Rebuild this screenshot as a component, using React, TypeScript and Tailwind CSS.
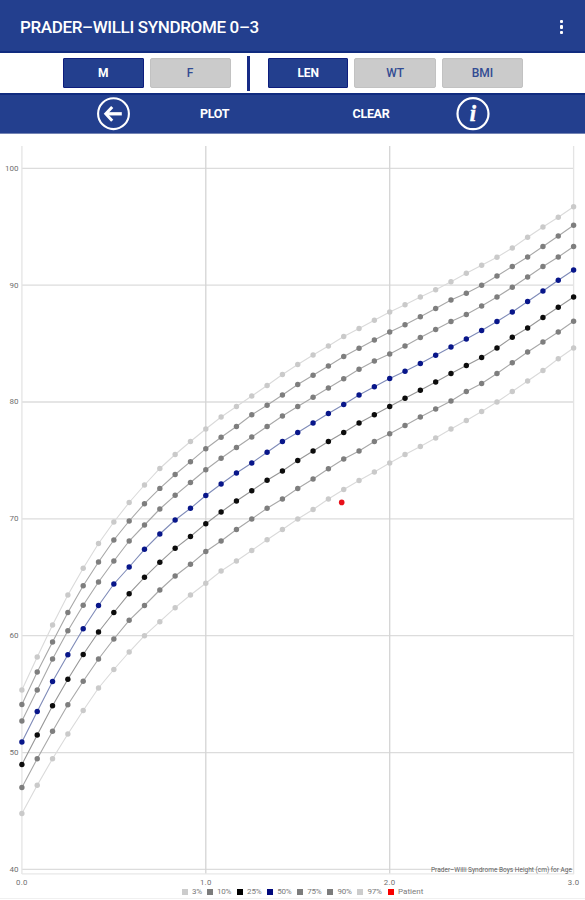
const X0 = 21.9
const STEP = 15.325
const CHART_TOP = 134

interface Series {
  label: string
  color: string
  line: string
  swatch: string
  points: number[]
}

// one point per month, 0 - 36
const series: Series[] = [
  {
    label: '3%',
    color: '#cacaca',
    line: '#dadada',
    swatch: 'bg-[#cccccc]',
    points: [
      813.5, 785.3, 758.7, 734, 710.5, 688, 669.5, 652, 635.7, 621.7, 607.7, 595, 583.3, 571, 561, 550.5, 539.7, 529.5, 519,
      509.5, 499, 489.5, 480.5, 472, 463, 454.5, 446.5, 438, 429, 420.5, 411.5, 402, 391.5, 381, 370.5, 358.7, 348,
    ],
  },
  {
    label: '10%',
    color: '#7e7e7e',
    line: '#a8a8a8',
    swatch: 'bg-[#7c7c7c]',
    points: [
      787.5, 758.7, 731.3, 704.7, 681.3, 659, 639, 620.3, 605.5, 590, 576, 564.3, 551.5, 541, 529.5, 519, 508.3, 499, 488.5,
      479, 468.7, 459, 451, 441.5, 433.7, 425.5, 417, 409, 401, 391.5, 383.5, 373.5, 362.7, 352, 342, 332, 321.3,
    ],
  },
  {
    label: '25%',
    color: '#0c0c0c',
    line: '#969696',
    swatch: 'bg-black',
    points: [
      764.5, 735, 705.7, 679.3, 654.5, 632, 612.5, 593.7, 577.3, 562.3, 548.3, 536.5, 523.7, 512, 501, 490.7, 480.3, 471, 460.5,
      451, 441.5, 432.5, 423, 414.7, 406.5, 398.3, 390.3, 382, 373.5, 365.5, 357.5, 348, 337.3, 328, 317.5, 307.3, 297,
    ],
  },
  {
    label: '50%',
    color: '#08168a',
    line: '#7f8bb8',
    swatch: 'bg-[#00087c]',
    points: [
      742, 711.5, 681.5, 654.7, 628.7, 605.5, 584, 567, 549.3, 534, 520, 508.3, 495.5, 484, 473, 463, 452.3, 441.5, 432.5,
      423, 413.5, 404.5, 395, 386.7, 378.5, 371.3, 363.5, 355.3, 347, 339, 330.5, 321.5, 312, 301.5, 291, 280.3, 270,
    ],
  },
  {
    label: '75%',
    color: '#7e7e7e',
    line: '#a8a8a8',
    swatch: 'bg-[#7c7c7c]',
    points: [
      721, 690, 659, 630.7, 605.3, 582, 561, 541, 525, 509, 495.3, 482.5, 469.8, 458.3, 447.5, 437, 426.5, 416, 406.5,
      397.3, 388, 378.7, 369.3, 361, 354, 346, 337.5, 329.5, 321.5, 314.5, 306, 297, 287.3, 277, 266.5, 257, 246.5,
    ],
  },
  {
    label: '90%',
    color: '#7e7e7e',
    line: '#a8a8a8',
    swatch: 'bg-[#7c7c7c]',
    points: [
      704.5, 672, 642, 612.5, 585.7, 562, 540, 521, 503.7, 488.4, 474.5, 461.7, 448.7, 437.3, 426.5, 414.7, 405.3, 395, 384.5,
      375.3, 366, 356.5, 348.3, 340, 332, 324.7, 316.7, 308.5, 300, 293.3, 285.3, 276, 266.5, 257, 246.5, 236, 225.3,
    ],
  },
  {
    label: '97%',
    color: '#cacaca',
    line: '#dadada',
    swatch: 'bg-[#cccccc]',
    points: [
      690, 657, 625, 595, 568.3, 543.5, 522, 502.5, 485, 468.5, 454.5, 441.5, 429, 417, 406.5, 396, 385.5, 374.5, 364.5,
      355, 346, 336.5, 328.5, 320.3, 312, 304.7, 297, 289.8, 281.7, 273.3, 265.3, 257.3, 248, 237.3, 227, 217.3, 206.7,
    ],
  },
]

const yTicks = [100, 90, 80, 70, 60, 50, 40]
const xTicks = ['0.0', '1.0', '2.0', '3.0']

const yFor = (value: number) => 168.3 + (100 - value) * 11.685 - CHART_TOP
const xFor = (month: number) => X0 + month * STEP

interface ToggleProps {
  label: string
  active?: boolean
}

function Toggle({ label, active }: ToggleProps) {
  return (
    <button
      className={
        active
          ? 'h-[30px] w-[80.5px] rounded-[1px] border border-[#0d1d7d] bg-[#233f8e] text-[12px] font-bold text-white'
          : 'h-[30px] w-[81.3px] rounded-[2px] border border-[#c2c2c2] bg-[#cbcbcb] text-[12px] font-medium text-[#324b93]'
      }
    >
      {label}
    </button>
  )
}

function Chart() {
  return (
    <svg width="585" height="752" viewBox="0 0 585 752" className="block shrink-0" fontFamily="Roboto, sans-serif">
      {/* grid */}
      {yTicks.map((tick) => (
        <g key={tick}>
          <line x1={X0} x2="574" y1={yFor(tick)} y2={yFor(tick)} stroke="#dcdcdc" strokeWidth="1.3" />
          <text x="18.6" y={yFor(tick) + 2.4} fontSize="8" textAnchor="end" fill="#6f6f6f">
            {tick}
          </text>
        </g>
      ))}
      {xTicks.map((tick, i) => (
        <g key={tick}>
          <line
            x1={xFor(i * 12)}
            x2={xFor(i * 12)}
            y1="12"
            y2="740"
            stroke={i === 1 || i === 2 ? '#d4d4d4' : '#e4e4e4'}
            strokeWidth="1.3"
          />
          <text x={xFor(i * 12)} y="751" fontSize="7.8" letterSpacing="0.3" textAnchor="middle" fill="#6f6f6f">
            {tick}
          </text>
        </g>
      ))}
      <line x1={X0} x2="574" y1="739.8" y2="739.8" stroke="#e8e8e8" strokeWidth="1.3" />

      {/* percentile curves */}
      {series.map((s) => (
        <g key={s.label}>
          <polyline
            points={s.points.map((y, i) => `${xFor(i)},${y - CHART_TOP}`).join(' ')}
            fill="none"
            stroke={s.line}
            strokeWidth="1.1"
          />
          {s.points.map((y, i) => (
            <circle key={i} cx={xFor(i)} cy={y - CHART_TOP} r="2.7" fill={s.color} />
          ))}
        </g>
      ))}

      {/* patient */}
      <circle cx="341.7" cy="368.4" r="2.8" fill="#e8101a" />

      <text x="572" y="738.4" fontSize="6.6" textAnchor="end" fill="#5c5c5c" textLength="141" lengthAdjust="spacingAndGlyphs">
        Prader–Willi Syndrome Boys Height (cm) for Age
      </text>
    </svg>
  )
}

export default function App() {
  return (
    <div className="flex h-[900px] w-[585px] flex-col overflow-hidden bg-white font-['Roboto',sans-serif]">
      <header className="flex h-[53px] shrink-0 items-center justify-between border-b-2 border-[#102b7f] bg-[#233f8e] pr-[22px] pl-[20px]">
        <h1 className="pt-[4px] text-[17px] font-medium tracking-[-0.35px] whitespace-nowrap text-white">
          PRADER–WILLI SYNDROME 0–3
        </h1>
        <button className="flex flex-col gap-[2px] pt-[3px]">
          <span className="size-[3.5px] rounded-[1px] bg-white" />
          <span className="size-[3.5px] rounded-[1px] bg-white" />
          <span className="size-[3.5px] rounded-[1px] bg-white" />
        </button>
      </header>

      <div className="flex h-[40px] shrink-0 items-center pl-[63px]">
        <div className="flex gap-[6px]">
          <Toggle label="M" active />
          <Toggle label="F" />
        </div>
        <div className="mr-[17.5px] ml-[16.7px] h-[35px] w-[3px] bg-[#172b86]" />
        <div className="flex gap-[6px]">
          <Toggle label="LEN" active />
          <Toggle label="WT" />
          <Toggle label="BMI" />
        </div>
      </div>

      <div className="flex h-[41px] shrink-0 items-center border-t-2 border-b border-t-[#102b7f] border-b-[#7484b4] bg-[#233f8e] pl-[97px] text-[12.5px] font-bold text-white">
        <svg width="33" height="34" viewBox="0 0 33 34" fill="none" stroke="#ffffff">
          <circle cx="16.5" cy="16.7" r="15.4" strokeWidth="2.1" />
          <path d="M24.8 16.8H9.5" strokeWidth="3.3" />
          <path d="M15.2 9.9L8.8 16.8L15.2 23.7" strokeWidth="3" />
        </svg>
        <button className="ml-[69.5px] w-[30px] tracking-[-0.3px]">PLOT</button>
        <button className="ml-[122px] w-[39px] tracking-[-0.3px]">CLEAR</button>
        <svg width="34" height="34" viewBox="0 0 34 34" className="ml-[65px]">
          <circle cx="17" cy="16.7" r="15.5" fill="none" stroke="#ffffff" strokeWidth="2.2" />
          <text
            x="16.8"
            y="23.6"
            fontSize="22.5"
            fontWeight="bold"
            fontStyle="italic"
            fontFamily="'Liberation Serif', serif"
            textAnchor="middle"
            fill="#ffffff"
            stroke="#ffffff"
            strokeWidth="0.5"
          >
            i
          </text>
        </svg>
      </div>

      <Chart />

      <div className="flex h-[10px] shrink-0 items-center pt-[1px] pl-[182px] text-[8px] leading-none text-[#7a7a7a]">
        {series.map((s) => (
          <div
            key={s.label}
            className={s.label === '3%' ? 'flex w-[25px] items-center gap-[4px]' : 'flex w-[30.1px] items-center gap-[4px]'}
          >
            <span className={`size-[6px] ${s.swatch}`} />
            <span className="tracking-[-0.2px]">{s.label}</span>
          </div>
        ))}
        <div className="flex items-center gap-[4.5px]">
          <span className="size-[6px] bg-[#f80000]" />
          <span>Patient</span>
        </div>
      </div>
      <div className="mt-[2px] h-px shrink-0 bg-[#f0f0f0]" />
    </div>
  )
}
